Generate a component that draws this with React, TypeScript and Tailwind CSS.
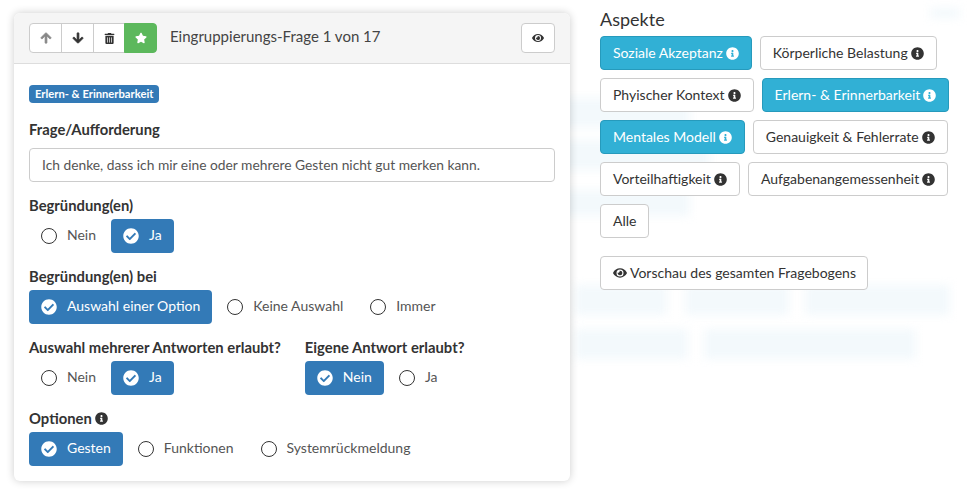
import { FaArrowDown, FaArrowUp, FaCheckCircle, FaEye, FaInfoCircle, FaStar, FaTrashAlt } from 'react-icons/fa';

const aspects = [
    { label: 'Soziale Akzeptanz', active: true },
    { label: 'Körperliche Belastung', active: false },
    { label: 'Phyischer Kontext', active: false },
    { label: 'Erlern- & Erinnerbarkeit', active: true },
    { label: 'Mentales Modell', active: true },
    { label: 'Genauigkeit & Fehlerrate', active: false },
    { label: 'Vorteilhaftigkeit', active: false },
    { label: 'Aufgabenangemessenheit', active: false },
];

const blurred = [
    'left-[930px] top-[8px] w-[30px] h-[10px]',
    'left-[560px] top-[98px] w-[130px] h-[30px]',
    'left-[560px] top-[140px] w-[150px] h-[30px]',
    'left-[560px] top-[190px] w-[130px] h-[26px]',
    'left-[575px] top-[285px] w-[92px] h-[30px]',
    'left-[685px] top-[285px] w-[104px] h-[30px]',
    'left-[805px] top-[285px] w-[145px] h-[30px]',
    'left-[575px] top-[329px] w-[113px] h-[30px]',
    'left-[704px] top-[329px] w-[212px] h-[30px]',
];

function Option({ label, selected }: { label: string; selected?: boolean }) {
    return (
        <div
            className={
                selected
                    ? 'h-[34px] px-3 flex items-center gap-2.5 rounded bg-[#337ab7] text-white'
                    : 'h-[34px] px-3 flex items-center gap-2.5 rounded text-[#555]'
            }
        >
            {selected ? (
                <FaCheckCircle className="text-base" />
            ) : (
                <span className="w-4 h-4 rounded-full border-[1.5px] border-[#333]" />
            )}
            <span className="pb-0.5">{label}</span>
        </div>
    );
}

function Label({ children }: { children: React.ReactNode }) {
    return <div className="font-bold text-[14.8px] text-[#333] leading-5 mb-1">{children}</div>;
}

function GroupButton({ children, className }: { children: React.ReactNode; className: string }) {
    return (
        <div className={`h-[30px] flex items-center justify-center text-xs border ${className}`}>
            {children}
        </div>
    );
}

export default function App() {
    return (
        <div className="relative w-[968px] h-[492px] overflow-hidden bg-white font-['Lato',sans-serif] text-sm text-[#333]">
            {blurred.map((b) => (
                <div key={b} className={`absolute ${b} bg-[#f3f9fc] blur-[5px]`} />
            ))}

            <div className="relative flex items-start pl-3.5 pt-[13px]">
                <div className="w-[556px] h-[468px] bg-white rounded-md shadow-[0_0_8px_rgba(0,0,0,0.2)] overflow-hidden">
                    <div className="h-[51px] px-[15px] flex items-center bg-[#f5f5f5] border-b border-[#ddd]">
                        <div className="flex">
                            <GroupButton className="w-[33px] rounded-l bg-white border-[#ccc] text-[#888]">
                                <FaArrowUp className="stroke-[30]" />
                            </GroupButton>
                            <GroupButton className="w-[33px] -ml-px bg-white border-[#ccc] text-[#333]">
                                <FaArrowDown className="stroke-[30]" />
                            </GroupButton>
                            <GroupButton className="w-[32px] -ml-px bg-white border-[#ccc] text-[#333]">
                                <FaTrashAlt className="text-[11px]" />
                            </GroupButton>
                            <GroupButton className="w-[33px] -ml-px rounded-r bg-[#5cb85c] border-[#5cb85c] text-white">
                                <FaStar />
                            </GroupButton>
                        </div>
                        <h3 className="ml-[13px] text-[15px] text-[#444] -mt-0.5">Eingruppierungs-Frage 1 von 17</h3>
                        <div className="ml-auto w-[34px] h-[30px] flex items-center justify-center bg-white border border-[#ccc] rounded text-xs">
                            <FaEye />
                        </div>
                    </div>

                    <div className="px-[15px] pt-[21px]">
                        <span className="inline-block h-[18px] px-[6px] rounded bg-[#337ab7] text-white text-[11.2px] font-bold leading-[18px] align-top">
                            Erlern- &amp; Erinnerbarkeit
                        </span>
                        <div className="mt-[14px]">
                            <div className="font-bold text-[14.8px] text-[#333] leading-5 mb-[9px]">Frage/Aufforderung</div>
                            <div className="h-[34px] px-3 flex items-center border border-[#ccc] rounded text-[13.8px] text-[#555]">
                                Ich denke, dass ich mir eine oder mehrere Gesten nicht gut merken kann.
                            </div>
                        </div>
                        <div className="mt-[13px]">
                            <Label>Begründung(en)</Label>
                            <div className="flex gap-[3px]">
                                <Option label="Nein" />
                                <Option label="Ja" selected />
                            </div>
                        </div>
                        <div className="mt-[13px]">
                            <Label>Begründung(en) bei</Label>
                            <div className="flex gap-[3px]">
                                <Option label="Auswahl einer Option" selected />
                                <Option label="Keine Auswahl" />
                                <Option label="Immer" />
                            </div>
                        </div>
                        <div className="mt-[13px] flex gap-[24px]">
                            <div>
                                <Label>Auswahl mehrerer Antworten erlaubt?</Label>
                                <div className="flex gap-[3px]">
                                    <Option label="Nein" />
                                    <Option label="Ja" selected />
                                </div>
                            </div>
                            <div>
                                <Label>Eigene Antwort erlaubt?</Label>
                                <div className="flex gap-[3px]">
                                    <Option label="Nein" selected />
                                    <Option label="Ja" />
                                </div>
                            </div>
                        </div>
                        <div className="mt-[13px]">
                            <Label>
                                <span className="inline-flex items-center gap-[3px]">
                                    Optionen <FaInfoCircle className="text-[13px]" />
                                </span>
                            </Label>
                            <div className="flex gap-[3px]">
                                <Option label="Gesten" selected />
                                <Option label="Funktionen" />
                                <Option label="Systemrückmeldung" />
                            </div>
                        </div>
                    </div>
                </div>

                <div className="ml-[30px] w-[356px] -mt-[3px]">
                    <h4 className="text-lg leading-5 text-[#333] mb-[6px] -translate-y-px">Aspekte</h4>
                    <div className="flex flex-wrap gap-2">
                        {aspects.map((a) => (
                            <div
                                key={a.label}
                                className={
                                    a.active
                                        ? 'h-[34px] px-3 flex items-center gap-[3px] rounded bg-[#31b0d5] border border-[#269abc] text-white'
                                        : 'h-[34px] px-3 flex items-center gap-[3px] rounded bg-white border border-[#ccc]'
                                }
                            >
                                {a.label} <FaInfoCircle className="text-[13px]" />
                            </div>
                        ))}
                        <div className="h-[34px] px-3 flex items-center rounded bg-white border border-[#ccc]">Alle</div>
                    </div>
                    <div className="mt-[18px] inline-flex h-[34px] pl-3 pr-[11px] items-center gap-[3px] rounded bg-white border border-[#ccc]">
                        <FaEye className="text-sm" /> Vorschau des gesamten Fragebogens
                    </div>
                </div>
            </div>
        </div>
    );
}
